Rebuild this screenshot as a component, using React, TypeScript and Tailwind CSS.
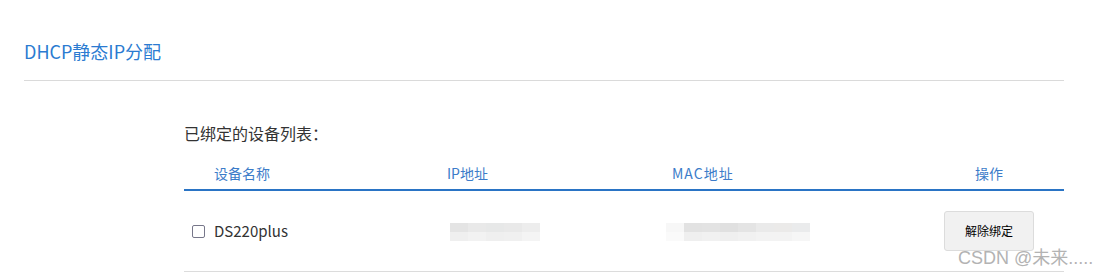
const FONT = { fontFamily: '"Microsoft YaHei", "Noto Sans CJK SC", "Noto Sans", sans-serif' };

function Blur({ blocks }: { blocks: [string, string][] }) {
  return (
    <div className="flex blur-[0.6px]">
      {blocks.map(([top, bottom], i) => (
        <div key={i} className="flex flex-col">
          <div className="h-[9px] w-[18px]" style={{ backgroundColor: top }} />
          <div className="h-[9px] w-[18px]" style={{ backgroundColor: bottom }} />
        </div>
      ))}
    </div>
  );
}

const IP_BLUR: [string, string][] = [
  ["#e4e4e4", "#efefef"],
  ["#e9e9e9", "#f2f2f2"],
  ["#e7e8e8", "#efefef"],
  ["#e9e9e9", "#f0f0f0"],
  ["#ededed", "#f4f4f4"],
];

const MAC_BLUR: [string, string][] = [
  ["#f7f7f7", "#fafafa"],
  ["#e2e2e2", "#efefef"],
  ["#e3e3e3", "#f1f1f1"],
  ["#e0e0e0", "#efefef"],
  ["#e4e4e4", "#f1f1f1"],
  ["#eaeaea", "#f3f3f3"],
  ["#ebeae9", "#f3f3f3"],
  ["#eaebec", "#f6f6f6"],
];

export default function App() {
  return (
    <div className="relative h-[279px] w-[1114px] overflow-hidden bg-white" style={FONT}>
      <div className="mx-[24px] w-[1040px] border-b border-[#dadada] pt-[38px] pb-[16px]">
        <h1 className="text-[18px] leading-[26px] text-[#2b7bd1]">DHCP静态IP分配</h1>
      </div>

      <div className="ml-[184px] w-[880px] pt-[41px]">
        <p className="text-[16px] leading-[22px] text-[#333]">已绑定的设备列表：</p>

        <div className="mt-[19px] grid grid-cols-[263px_225px_242px_1fr] border-b-2 border-[#2a74c5] pb-[6px] text-[14px] leading-[20px] text-[#3c7cc9]">
          <div className="pl-[30px]">设备名称</div>
          <div>IP地址</div>
          <div className="tracking-[1px]">MAC地址</div>
          <div className="text-center">操作</div>
        </div>

        <div className="grid h-[81px] grid-cols-[263px_225px_242px_1fr] items-center border-b border-[#dcdcdc] text-[14px] text-[#333]">
          <label className="flex items-center gap-[9px] pl-[8px]">
            <span className="h-[13px] w-[13px] rounded-[2px] border border-[#77778a] bg-white" />
            <span className="text-[15px]">DS220plus</span>
          </label>
          <div className="pl-[3px] pt-[2px]">
            <Blur blocks={IP_BLUR} />
          </div>
          <div className="-ml-[6px] pt-[2px]">
            <Blur blocks={MAC_BLUR} />
          </div>
          <div className="flex justify-center">
            <button className="h-[40px] w-[90px] rounded-[3px] border border-[#dcdcdc] bg-[#f1f1f1] text-[12px] text-black">
              解除绑定
            </button>
          </div>
        </div>
      </div>

      <div className="absolute left-[958px] top-[247px] text-[18px] leading-[22px] text-[#b3b3b3]" style={{ fontFamily: '"Liberation Sans", "Noto Sans CJK SC", sans-serif' }}>
        CSDN @未来.....
      </div>
    </div>
  );
}
